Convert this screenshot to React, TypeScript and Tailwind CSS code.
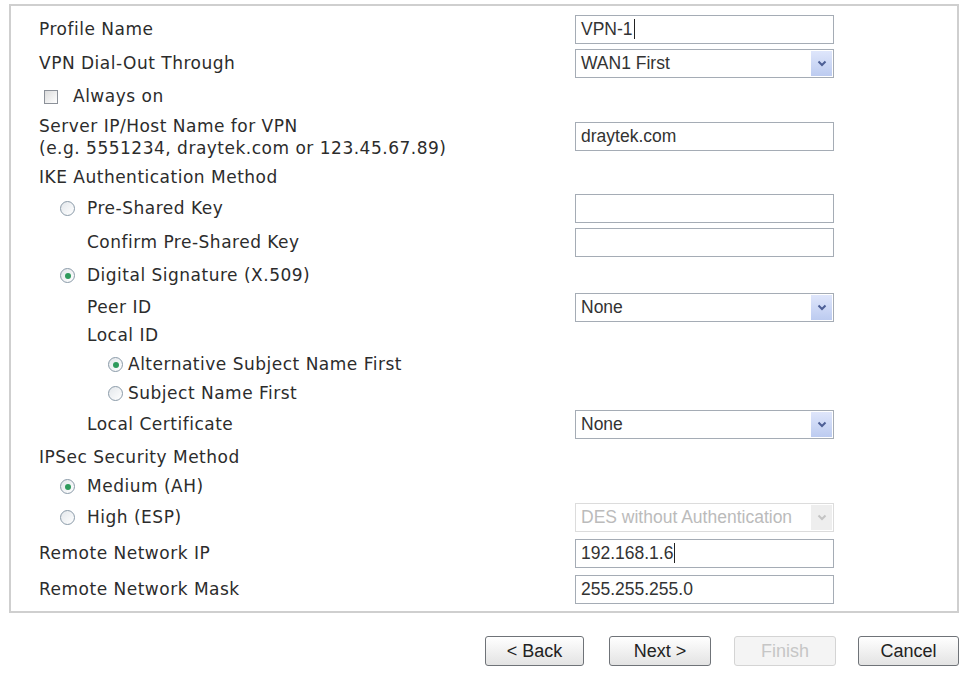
import React from 'react';

const LABEL = "text-[17px] tracking-[0.5px] text-[#2c2c2c] font-['DejaVu_Sans',Verdana,sans-serif] whitespace-nowrap";
const FIELD = "font-['Liberation_Sans',Arial,sans-serif] text-[17.5px]";

const Radio = ({ checked }: { checked?: boolean }) => (
  <span className="inline-flex h-[15px] w-[15px] shrink-0 items-center justify-center rounded-full border border-[#8a9aa8] bg-gradient-to-br from-[#e3e7eb] to-white">
    {checked && <span className="h-[6px] w-[6px] rounded-full bg-[#2f9a5c]" />}
  </span>
);

const TextInput = ({ value, caret }: { value?: string; caret?: boolean }) => (
  <div className={`flex h-[29px] w-[259px] items-center border border-[#a5acb5] bg-white px-[5px] text-[#333] ${FIELD}`}>
    {value}
    {caret && <span className="ml-[1px] inline-block h-[20px] w-[1px] bg-[#222]" />}
  </div>
);

const Select = ({ value, disabled }: { value: string; disabled?: boolean }) => (
  <div
    className={`flex h-[29px] w-[259px] items-center border bg-white pl-[5px] pr-[1px] ${FIELD} ${
      disabled ? 'border-[#dcdcdc] text-[#bbbbbb]' : 'border-[#a5acb5] text-[#333]'
    }`}
  >
    <span className="flex-1">{value}</span>
    <span
      className={`flex h-[25px] w-[21px] items-center justify-center ${
        disabled ? 'bg-[#eeeeee]' : 'bg-gradient-to-b from-[#dfe6fb] to-[#bccbf0]'
      }`}
    >
      <svg width="10" height="7" viewBox="0 0 10 7">
        <path d="M1.5 1.5 L5 5 L8.5 1.5" fill="none" stroke={disabled ? '#c4c4c4' : '#4d5f96'} strokeWidth="2" />
      </svg>
    </span>
  </div>
);

type Row = { h: number; indent?: number; label: React.ReactNode; control?: React.ReactNode };

const rows: Row[] = [
  { h: 34, label: 'Profile Name', control: <TextInput value="VPN-1" caret /> },
  { h: 34, label: 'VPN Dial-Out Through', control: <Select value="WAN1 First" /> },
  {
    h: 32,
    indent: 5,
    label: (
      <span className="flex items-center gap-[15px]">
        <span className="h-[14px] w-[14px] border border-[#8c9199] bg-gradient-to-br from-[#dcdcdc] to-white" />
        Always on
      </span>
    ),
  },
  {
    h: 48,
    label: (
      <span className="flex flex-col leading-[22px]">
        <span>Server IP/Host Name for VPN</span>
        <span>(e.g. 5551234, draytek.com or 123.45.67.89)</span>
      </span>
    ),
    control: <TextInput value="draytek.com" />,
  },
  { h: 34, label: 'IKE Authentication Method' },
  {
    h: 28,
    indent: 21,
    label: (
      <span className="flex items-center gap-[12px]">
        <Radio />
        Pre-Shared Key
      </span>
    ),
    control: <TextInput />,
  },
  { h: 40, indent: 48, label: 'Confirm Pre-Shared Key', control: <TextInput /> },
  {
    h: 26,
    indent: 21,
    label: (
      <span className="flex items-center gap-[12px]">
        <Radio checked />
        Digital Signature (X.509)
      </span>
    ),
  },
  { h: 38, indent: 48, label: 'Peer ID', control: <Select value="None" /> },
  { h: 18, indent: 48, label: 'Local ID' },
  {
    h: 40,
    indent: 69,
    label: (
      <span className="flex items-center gap-[5px]">
        <Radio checked />
        Alternative Subject Name First
      </span>
    ),
  },
  {
    h: 18,
    indent: 69,
    label: (
      <span className="flex items-center gap-[5px]">
        <Radio />
        Subject Name First
      </span>
    ),
  },
  { h: 44, indent: 48, label: 'Local Certificate', control: <Select value="None" /> },
  { h: 22, label: 'IPSec Security Method' },
  {
    h: 36,
    indent: 21,
    label: (
      <span className="flex items-center gap-[12px]">
        <Radio checked />
        Medium (AH)
      </span>
    ),
  },
  {
    h: 26,
    indent: 21,
    label: (
      <span className="flex items-center gap-[12px]">
        <Radio />
        High (ESP)
      </span>
    ),
    control: <Select value="DES without Authentication" disabled />,
  },
  { h: 46, label: 'Remote Network IP', control: <TextInput value="192.168.1.6" caret /> },
  { h: 26, label: 'Remote Network Mask', control: <TextInput value="255.255.255.0" /> },
];

const Button = ({ children, disabled, w }: { children: React.ReactNode; disabled?: boolean; w: string }) => (
  <button
    className={`flex h-[30px] ${w} items-center justify-center rounded-[3px] border font-['Liberation_Sans',Arial,sans-serif] text-[18px] ${
      disabled
        ? 'border-[#d4d4d4] bg-[#f4f4f4] text-[#c6c6c6]'
        : 'border-[#6f7378] bg-gradient-to-b from-white to-[#e3e3e3] text-[#222]'
    }`}
  >
    {children}
  </button>
);

export default function App() {
  return (
    <div className="h-[673px] w-[965px] overflow-hidden bg-white">
      <div className="ml-[9px] mt-[4px] h-[609px] w-[950px] border-2 border-[#cfcfcf] pt-[6px]">
        {rows.map((r, i) => (
          <div key={i} className="flex items-center" style={{ height: r.h }}>
            <div className={`w-[564px] pl-[28px] ${LABEL}`}>
              <div className="pt-[1px]" style={{ paddingLeft: r.indent ?? 0 }}>{r.label}</div>
            </div>
            {r.control}
          </div>
        ))}
      </div>
      <div className="mt-[23px] flex pl-[485px]">
        <Button w="w-[99px]">&lt; Back</Button>
        <div className="w-[25px]" />
        <Button w="w-[102px]">Next &gt;</Button>
        <div className="w-[23px]" />
        <Button w="w-[102px]" disabled>Finish</Button>
        <div className="w-[22px]" />
        <Button w="w-[101px]">Cancel</Button>
      </div>
    </div>
  );
}
